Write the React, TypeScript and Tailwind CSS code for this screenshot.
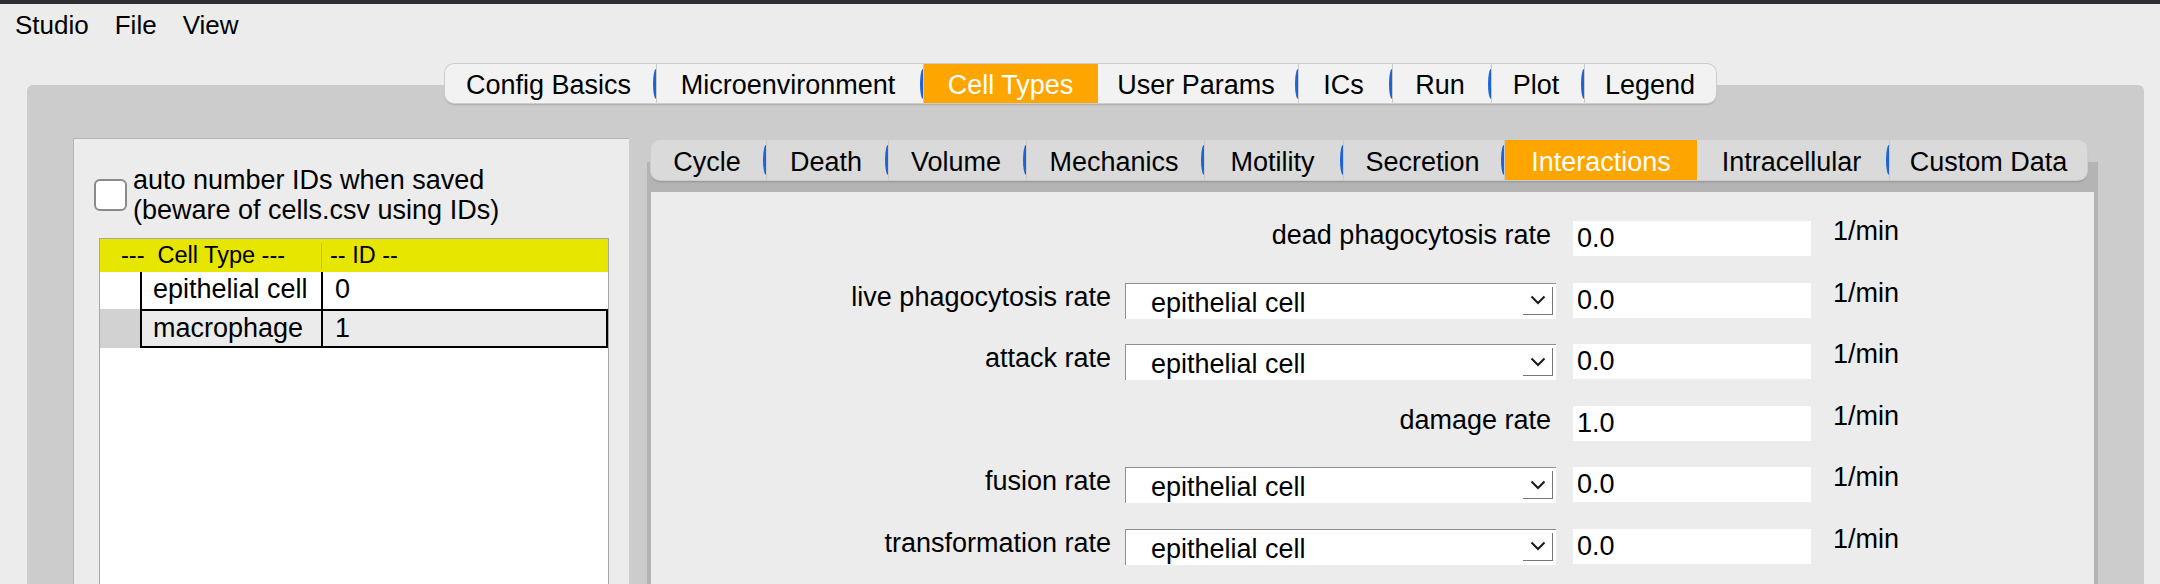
import clsx from 'clsx';

type TabDef = { label: string; w: string; sep: boolean; active?: boolean };

const topTabs: TabDef[] = [
    { label: 'Config Basics', w: 'w-[208px]', sep: false },
    { label: 'Microenvironment', w: 'w-[267px]', sep: true },
    { label: 'Cell Types', w: 'w-[178px]', sep: true, active: true },
    { label: 'User Params', w: 'w-[197px]', sep: false },
    { label: 'ICs', w: 'w-[94px]', sep: true },
    { label: 'Run', w: 'w-[99px]', sep: true },
    { label: 'Plot', w: 'w-[93px]', sep: true },
    { label: 'Legend', w: 'w-[135px]', sep: true },
];

const subTabs: TabDef[] = [
    { label: 'Cycle', w: 'w-[112px]', sep: false },
    { label: 'Death', w: 'w-[122px]', sep: true },
    { label: 'Volume', w: 'w-[138px]', sep: true },
    { label: 'Mechanics', w: 'w-[178px]', sep: true },
    { label: 'Motility', w: 'w-[139px]', sep: true },
    { label: 'Secretion', w: 'w-[161px]', sep: true },
    { label: 'Interactions', w: 'w-[196px]', sep: true, active: true },
    { label: 'Intracellular', w: 'w-[189px]', sep: false },
    { label: 'Custom Data', w: 'w-[201px]', sep: true },
];

function TabBar({ tabs, sub }: { tabs: TabDef[]; sub?: boolean }) {
    return (
        <div
            className={clsx(
                'flex overflow-hidden rounded-[9px] shadow-[0_0_0_1px_#cdcdcd,0_2px_2px_rgba(0,0,0,0.18)]',
                sub ? 'h-[40px] bg-[#dadada]' : 'h-[39px] bg-[#f2f2f2]'
            )}
        >
            {tabs.map((t) => (
                <div key={t.label} className={clsx('flex h-full shrink-0', t.w)}>
                    {t.sep && (
                        <div className="flex h-full shrink-0 items-center">
                            <div className="h-[30px] w-[3px] rounded-l-[100%_50%] bg-[#1d63d8]" />
                            <div className="h-full w-px bg-[#c9c9c9]" />
                        </div>
                    )}
                    <div
                        className={clsx(
                            'flex flex-1 items-center justify-center whitespace-nowrap pt-[4px]',
                            t.active ? 'bg-[#ffa500] text-white' : 'text-black'
                        )}
                    >
                        {t.label}
                    </div>
                </div>
            ))}
        </div>
    );
}

function CellSelect() {
    return (
        <div className="relative h-[36px] w-[431px] border-l border-t border-[#8f8f8f] bg-white pl-[25px] pt-[2px] leading-[35px] whitespace-nowrap">
            epithelial cell
            <div className="absolute bottom-[4px] right-[3px] top-[3px] flex w-[30px] items-center justify-center border-b border-r border-[#777777]">
                <svg width="16" height="10" viewBox="0 0 16 10">
                    <path d="M1.5 1.5 8 8l6.5-6.5" fill="none" stroke="#1a1a1a" strokeWidth="2" />
                </svg>
            </div>
        </div>
    );
}

function ValueBox({ value }: { value: string }) {
    return <div className="h-[35px] w-[238px] bg-white pl-[4px] leading-[35px]">{value}</div>;
}

const rows = [
    { label: 'dead phagocytosis rate', select: false, value: '0.0' },
    { label: 'live phagocytosis rate', select: true, value: '0.0' },
    { label: 'attack rate', select: true, value: '0.0' },
    { label: 'damage rate', select: false, value: '1.0' },
    { label: 'fusion rate', select: true, value: '0.0' },
    { label: 'transformation rate', select: true, value: '0.0' },
];

function LeftPanel() {
    return (
        <div className="flex w-[556px] shrink-0 flex-col border-l border-t border-[#b3b3b3] bg-[#ececec]">
            {/* auto numbering */}
            <div className="flex items-center gap-[6px] pl-[20px] pt-[26px]">
                <div className="h-[32px] w-[33px] shrink-0 rounded-[6px] border-2 border-[#8a8a8a] bg-white" />
                <div className="leading-[30px]">
                    auto number IDs when saved
                    <br />
                    (beware of cells.csv using IDs)
                </div>
            </div>

            {/* cell type table */}
            <div className="ml-[25px] mr-[20px] mt-[13px] flex-1 border border-[#a6a6a6] bg-white">
                <div className="flex h-[33px] items-center bg-[#e6e600] text-[23.5px]">
                    <div className="w-[221px] whitespace-pre pl-[21px]">{'---  Cell Type ---'}</div>
                    <div className="h-[26px] w-px bg-[#b8b860]" />
                    <div className="pl-[8px]">-- ID --</div>
                </div>
                <div className="flex h-[37px]">
                    <div className="w-[40px] shrink-0 bg-white" />
                    <div className="flex flex-1 border-l-2 border-black leading-[35px]">
                        <div className="w-[179px] pl-[11px]">epithelial cell</div>
                        <div className="flex-1 border-l-2 border-black pl-[12px]">0</div>
                    </div>
                </div>
                <div className="flex h-[39px]">
                    <div className="w-[40px] shrink-0 bg-[#d2d2d2]" />
                    <div className="flex flex-1 border-2 border-black bg-[#ebebeb] leading-[35px]">
                        <div className="w-[179px] pl-[11px]">macrophage</div>
                        <div className="flex-1 border-l-2 border-black pl-[12px]">1</div>
                    </div>
                </div>
            </div>
        </div>
    );
}

function RightPanel() {
    return (
        <div className="flex flex-1 flex-col pt-[2px]">
            <div className="relative z-10 ml-[4px] self-start">
                <TabBar tabs={subTabs} sub />
            </div>
            <div className="-mt-[18px] flex-1 bg-[#b4b4b4] px-[4px] pt-[30px]">
                <div className="h-full bg-[#ececec] pt-[29px]">
                    <div className="grid auto-rows-[35px] grid-cols-[474px_448px_260px_auto] gap-y-[26.6px]">
                        {rows.map((r) => (
                            <div key={r.label} className="contents">
                                <div
                                    className={clsx(
                                        'mt-[1px] self-start whitespace-nowrap text-right leading-[26px]',
                                        r.select ? 'pr-[14px]' : 'col-span-2 pr-[22px]'
                                    )}
                                >
                                    {r.label}
                                </div>
                                {r.select && <CellSelect />}
                                <ValueBox value={r.value} />
                                <div className="-mt-[3px] self-start leading-[26px]">1/min</div>
                            </div>
                        ))}
                    </div>
                </div>
            </div>
        </div>
    );
}

export default function App() {
    return (
        <div className="h-[584px] w-[2160px] overflow-hidden bg-[#ececec] font-['Liberation_Sans',Arial,sans-serif] text-[27px] text-black">
            <div className="h-[4px] bg-[#2f2f33]" />

            {/* menu bar */}
            <div className="flex h-[42px] items-center gap-[26px] pl-[15px] text-[26px]">
                <span>Studio</span>
                <span>File</span>
                <span>View</span>
            </div>

            {/* main tabs */}
            <div className="relative z-10 mt-[18px] flex justify-center">
                <TabBar tabs={topTabs} />
            </div>
            <div className="-mt-[18px] ml-[27px] mr-[16px] flex h-[520px] gap-[18px] rounded-t-[6px] bg-[#cccccc] px-[46px] pt-[53px]">
                <LeftPanel />
                <RightPanel />
            </div>
        </div>
    );
}
